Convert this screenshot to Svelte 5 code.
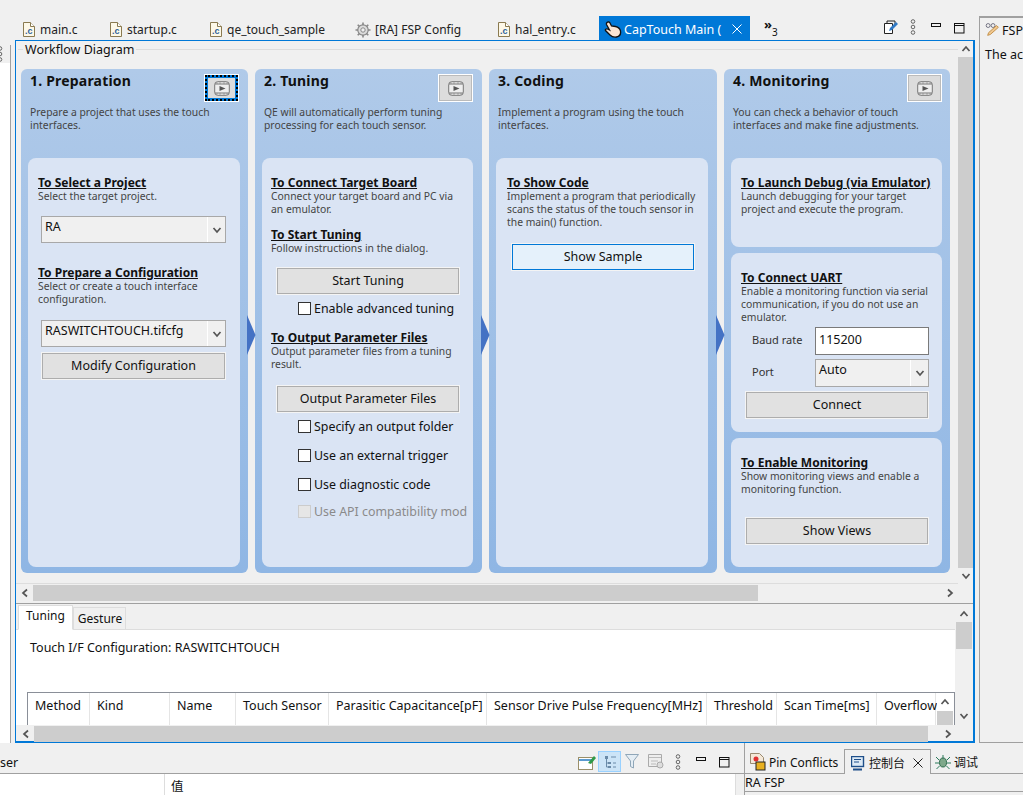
<script>
  const tabs = [
    { label: 'main.c', w: 87 },
    { label: 'startup.c', w: 100 },
    { label: 'qe_touch_sample', w: 145 },
    { label: '[RA] FSP Config', w: 143, gear: true },
    { label: 'hal_entry.c', w: 103 }
  ];
  const columns = [
    ['Method', 62, 'config01'], ['Kind', 80, 'Button(Self)'], ['Name', 66, ''], ['Touch Sensor', 93, ''],
    ['Parasitic Capacitance[pF]', 158, ''], ['Sensor Drive Pulse Frequency[MHz]', 220, ''],
    ['Threshold', 70, ''], ['Scan Time[ms]', 100, ''], ['Overflow', 59, '']
  ];
</script>

{#snippet fileIcon()}
  <svg class="ic" width="12" height="15" viewBox="0 0 12 15"><path d="M.5.5h7l4 4v10H.5z" fill="#fdf8e8" stroke="#8a7a50"/><path d="M7.5.5v4h4" fill="#fff" stroke="#8a7a50"/><text x="2" y="12" font-size="9" font-weight="700" fill="#2d5f9a" font-family="Liberation Sans">.c</text></svg>
{/snippet}

{#snippet chevron(d)}
  <svg class="chev" width="10" height="10" viewBox="0 0 10 10">
    {#if d === 'l'}<path d="M7 1.5 3 5l4 3.5" />
    {:else if d === 'r'}<path d="M3 1.5 7 5 3 8.5" />
    {:else if d === 'u'}<path d="M1.5 7 5 3l3.5 4" />
    {:else}<path d="M1.5 3 5 7l3.5-4" />{/if}
  </svg>
{/snippet}

{#snippet film(focused)}
  <div class="film" class:focused>
    <svg width="16" height="15" viewBox="0 0 16 15"><rect x=".7" y=".7" width="14.6" height="13.6" rx="3" fill="#eee" stroke="#777"/><path d="M1 3h14M1 12h14" stroke="#777"/><path d="M3 1.5v1M6 1.5v1M10 1.5v1M13 1.5v1M3 12.5v1M6 12.5v1M10 12.5v1M13 12.5v1" stroke="#777"/><path d="M5.5 5l6 2.5-6 2.5z" fill="#555"/></svg>
  </div>
{/snippet}

{#snippet combo(value, cls)}
  <div class="combo {cls}"><span class="combo-v">{value}</span><span class="combo-b">{@render chevron('d')}</span></div>
{/snippet}

{#snippet check(label, disabled, cls)}
  <div class="check {cls}" class:disabled><span class="box"></span><span>{label}</span></div>
{/snippet}

{#snippet arrow()}
  <svg class="arrow" width="9" height="40" viewBox="0 0 9 40"><path d="M0 0 8.5 20 0 40z" fill="#4472c4"/></svg>
{/snippet}

{#snippet dots()}
  <svg width="6" height="16" viewBox="0 0 6 16"><g fill="none" stroke="#666"><circle cx="3" cy="2.5" r="1.8"/><circle cx="3" cy="8" r="1.8"/><circle cx="3" cy="13.5" r="1.8"/></g></svg>
{/snippet}

{#snippet minmax()}
  <svg width="12" height="6" viewBox="0 0 12 6"><rect x=".5" y=".5" width="9" height="3" fill="none" stroke="#111"/></svg>
  <svg class="mx" width="12" height="12" viewBox="0 0 12 12"><rect x=".5" y=".5" width="9.5" height="9.5" fill="none" stroke="#111"/><path d="M.5 2.5h9.5" stroke="#111"/></svg>
{/snippet}

<div class="page">
  <div class="top">
    <aside class="left-stub"><div class="stub-head"><span class="stub-dots">{@render dots()}</span></div></aside>

    <section class="editor">
      <header class="tabbar">
        {#each tabs as t}
          <div class="tab" class:gear={t.gear} style="width:{t.w}px">
            {#if t.gear}
              <svg class="ic" width="16" height="16" viewBox="0 0 16 16"><circle cx="8" cy="8" r="5.2" fill="#ddd" stroke="#888" stroke-width="1.2"/><circle cx="8" cy="8" r="2.2" fill="#f0f0f0" stroke="#888"/><g stroke="#888" stroke-width="1.6"><path d="M8 .5v2.5M8 13v2.5M.5 8H3M13 8h2.5M2.7 2.7l1.7 1.7M11.6 11.6l1.7 1.7M2.7 13.3l1.7-1.7M11.6 4.4l1.7-1.7"/></g></svg>
            {:else}
              {@render fileIcon()}
            {/if}
            <span>{t.label}</span>
          </div>
        {/each}
        <div class="tab active">
          <svg width="18" height="17" viewBox="0 0 18 17"><path d="M3 1.5c1-1 2.500-.5 3 .5l1.500 3 4 .5c2.500.5 4.500 2 5 4.500.5 3-1 5.500-4 6-3 .5-5-.5-6.500-2L1.500 9.500c-.5-1 .5-2 2-1.500l2 1L2.500 3.500c-.2-.8 0-1.500.5-2z" fill="#fbe6d4" stroke="#111" stroke-width="1.300"/></svg>
          <span class="active-label">CapTouch Main (</span>
          <svg class="x" width="10" height="10" viewBox="0 0 10 10"><path d="M.5.5l9 9M9.500.5l-9 9" stroke="#fff"/></svg>
        </div>
        <div class="more"><span class="more-a">»</span><span class="more-n">3</span></div>
        <div class="tab-tools">
          <svg width="16" height="16" viewBox="0 0 16 16"><path d="M1.500 4.500h8v10h-8z" fill="#fff" stroke="#222"/><path d="M4 4V2h8v4" fill="none" stroke="#222"/><path d="M6 12l1-3 6-6 2 2-6 6z" fill="#2f78c4"/></svg>
          <span class="td">{@render dots()}</span>
          <span class="tm">{@render minmax()}</span>
        </div>
      </header>

      <div class="editor-body">
        <div class="workflow">
          <div class="wf-main">
            <div class="wf-content">
              <div class="legend"><span>Workflow Diagram</span></div>
              <div class="cards">
                <article class="card c1">
                  <div class="card-head"><h2>1. Preparation</h2>{@render film(true)}</div>
                  <p class="intro">Prepare a project that uses the touch interfaces.</p>
                  <div class="inner grow">
                    <h3>To Select a Project</h3>
                    <p>Select the target project.</p>
                    {@render combo('RA', 'c1a')}
                    <h3 class="h-prep">To Prepare a Configuration</h3>
                    <p>Select or create a touch interface configuration.</p>
                    {@render combo('RASWITCHTOUCH.tifcfg', 'c1b')}
                    <button class="btn b1">Modify Configuration</button>
                  </div>
                </article>
                <div class="gapcol">{@render arrow()}</div>
                <article class="card c2">
                  <div class="card-head"><h2>2. Tuning</h2>{@render film(false)}</div>
                  <p class="intro">QE will automatically perform tuning processing for each touch sensor.</p>
                  <div class="inner grow">
                    <h3>To Connect Target Board</h3>
                    <p>Connect your target board and PC via an emulator.</p>
                    <h3 class="h-start">To Start Tuning</h3>
                    <p>Follow instructions in the dialog.</p>
                    <button class="btn b2">Start Tuning</button>
                    {@render check('Enable advanced tuning', false, 'k0')}
                    <h3 class="h-out">To Output Parameter Files</h3>
                    <p>Output parameter files from a tuning result.</p>
                    <button class="btn b3">Output Parameter Files</button>
                    {@render check('Specify an output folder', false, 'k1')}
                    {@render check('Use an external trigger', false, 'k2')}
                    {@render check('Use diagnostic code', false, 'k2')}
                    {@render check('Use API compatibility mod', true, 'k3')}
                  </div>
                </article>
                <div class="gapcol">{@render arrow()}</div>
                <article class="card c3">
                  <div class="card-head"><h2>3. Coding</h2></div>
                  <p class="intro">Implement a program using the touch interfaces.</p>
                  <div class="inner grow">
                    <h3>To Show Code</h3>
                    <p>Implement a program that periodically scans the status of the touch sensor in the main() function.</p>
                    <button class="btn hot">Show Sample</button>
                  </div>
                </article>
                <div class="gapcol">{@render arrow()}</div>
                <article class="card c4card">
                  <div class="card-head"><h2>4. Monitoring</h2>{@render film(false)}</div>
                  <p class="intro">You can check a behavior of touch interfaces and make fine adjustments.</p>
                  <div class="stack">
                    <div class="inner s1">
                      <h3>To Launch Debug (via Emulator)</h3>
                      <p>Launch debugging for your target project and execute the program.</p>
                    </div>
                    <div class="inner s2">
                      <h3>To Connect UART</h3>
                      <p>Enable a monitoring function via serial communication, if you do not use an emulator.</p>
                      <div class="field f1"><label for="baud">Baud rate</label><input id="baud" value="115200" /></div>
                      <div class="field f2"><span class="flabel">Port</span>{@render combo('Auto', 'c4')}</div>
                      <button class="btn b4">Connect</button>
                    </div>
                    <div class="inner s3">
                      <h3>To Enable Monitoring</h3>
                      <p>Show monitoring views and enable a monitoring function.</p>
                      <button class="btn b5">Show Views</button>
                    </div>
                  </div>
                </article>
              </div>
            </div>
            <div class="vbar wf-v">
              <span class="sb-btn">{@render chevron('u')}</span>
              <span class="track"><span class="thumb"></span></span>
              <span class="sb-btn">{@render chevron('d')}</span>
            </div>
          </div>
          <div class="hbar wf-h">
            <span class="sb-btn first">{@render chevron('l')}</span>
            <span class="htrack"><span class="hthumb t1"></span></span>
            <span class="sb-btn">{@render chevron('r')}</span>
          </div>
        </div>

        <div class="lower">
          <div class="lower-main">
            <div class="lower-content">
              <div class="subtabs">
                <div class="subtab on">Tuning</div>
                <div class="subtab">Gesture</div>
              </div>
              <div class="pane">
                <div class="config">Touch I/F Configuration: RASWITCHTOUCH</div>
                <div class="table">
                  <div class="thead">
                    {#each columns as [name, w, cell]}
                      <div class="th" style="width:{w}px">{name}<div class="td-cell">{cell}</div></div>
                    {/each}
                  </div>
                  <div class="tv">
                    <span class="sb-btn">{@render chevron('u')}</span>
                    <span class="tvthumb"></span>
                  </div>
                </div>
              </div>
            </div>
            <div class="vbar lo-v">
              <span class="sb-btn">{@render chevron('u')}</span>
              <span class="track"><span class="thumb t2"></span></span>
              <span class="sb-btn">{@render chevron('d')}</span>
            </div>
          </div>
          <div class="hbar lo-h">
            <span class="sb-btn">{@render chevron('l')}</span>
            <span class="htrack"><span class="hthumb t3"></span></span>
            <span class="sb-btn">{@render chevron('r')}</span>
          </div>
        </div>
      </div>
    </section>

    <aside class="right">
      <div class="right-title">
        <svg width="18" height="18" viewBox="0 0 18 18"><circle cx="3.500" cy="4" r="2.200" fill="none" stroke="#667"/><circle cx="9" cy="4" r="2.200" fill="none" stroke="#667"/><path d="M3 15l1-3 9-8 2 2-9 8z" fill="#f0c890" stroke="#c08a40"/></svg>
        <span>FSP</span>
      </div>
      <div class="right-body">The ac</div>
    </aside>
  </div>

  <div class="bottom">
    <div class="b-left">
      <div class="b-bar">
        <span class="b-ser">ser</span>
        <div class="b-tools">
          <svg width="18" height="16" viewBox="0 0 18 16"><rect x=".5" y="3.500" width="14" height="12" fill="#fff" stroke="#9a8f6a"/><path d="M1 6h13" stroke="#5a9ad0" stroke-width="2"/><path d="M10 9l6-7 2 2-5 6z" fill="#2e9a48"/></svg>
          <span class="tool-on"><svg width="12" height="13" viewBox="0 0 12 13"><path d="M1 1h3v3H1zM4 7h3v2H4zM4 11h3v2H4z" fill="#6a8aa8"/><path d="M2.500 4v8M2.500 8H4M2.500 12H4M7 2h5M9 8h3M9 12h3" stroke="#6a8aa8" fill="none"/></svg></span>
          <svg width="14" height="15" viewBox="0 0 14 15"><path d="M.5.500h13L8.500 7v7l-3-1.500V7z" fill="#e4edf4" stroke="#8fa6b8"/></svg>
          <svg class="tb-table" width="16" height="15" viewBox="0 0 16 15"><path d="M.5.500h13v12H.5z" fill="#eee" stroke="#aaa"/><path d="M1 3.500h12M3 7h7M3 10h5" stroke="#bbb"/><circle cx="12" cy="11" r="3" fill="#ddd" stroke="#aaa"/></svg>
          <span class="bd">{@render dots()}</span>
          <span class="bm">{@render minmax()}</span>
        </div>
      </div>
      <div class="b-table">
        <div class="b-c1"></div>
        <div class="b-c2">值</div>
        <div class="b-c3"></div>
      </div>
    </div>
    <div class="b-right">
      <div class="b-tabs">
        <div class="btab pin">
          <svg width="18" height="18" viewBox="0 0 18 18"><path d="M.5.500h9l4 4v6H.5z" fill="#f4e8d8" stroke="#9a8a70"/><circle cx="6" cy="6" r="2.500" fill="#e03030"/><rect x="6" y="9" width="9" height="8" fill="#e8b020" stroke="#222"/></svg>
          <span>Pin Conflicts</span>
        </div>
        <div class="btab on">
          <svg width="15" height="15" viewBox="0 0 15 15"><rect x=".5" y=".5" width="12" height="10" fill="#ddeaf6" stroke="#1f4f8a" stroke-width="1.400"/><path d="M3 3.500h7M3 6h5" stroke="#1f4f8a"/><path d="M2 13.500h9" stroke="#1f4f8a" stroke-width="2"/></svg>
          <span>控制台</span>
          <svg class="bx" width="10" height="10" viewBox="0 0 10 10"><path d="M.5.5l9 9M9.500.5l-9 9" stroke="#222"/></svg>
        </div>
        <div class="btab dbg">
          <svg width="16" height="16" viewBox="0 0 16 16"><ellipse cx="8" cy="8.500" rx="3.500" ry="4.500" fill="#7ea88a" stroke="#2a6a4a"/><path d="M8 4V1M4 6 1 3M12 6l3-3M4 9H0M12 9h4M4.500 12l-3 3M11.500 12l3 3" stroke="#2a7a5a"/></svg>
          <span>调试</span>
        </div>
      </div>
      <div class="b-console">RA FSP</div>
    </div>
  </div>
</div>

<style>
  :global(body) { margin: 0; background: #f0f0f0; }
  * { box-sizing: border-box; }
  .page {
    width: 1023px; height: 795px; overflow: hidden; background: #f0f0f0; color: #111;
    font-family: "Noto Sans", "Noto Sans CJK SC", sans-serif; font-size: 12.5px;
    display: flex; flex-direction: column;
  }
  .top { height: 743px; display: flex; flex: none; }
  .bottom { flex: 1; display: flex; }
  .left-stub { width: 11px; margin-top: 45px; border-right: 1px solid #a0a0a0; background: #fff; flex: none; }
  .stub-head { height: 18px; background: #f0f0f0; overflow: hidden; }
  .stub-dots { display: block; margin: 1px 0 0 -3px; }

  .editor { width: 960px; margin-left: 4px; flex: none; display: flex; flex-direction: column; }
  .tabbar { height: 40px; flex: none; display: flex; align-items: flex-end; padding-left: 8px; }
  .tab { height: 24px; display: flex; align-items: center; gap: 5px; font-size: 12px; white-space: nowrap; color: #222; padding-top: 3px; flex: none; }
  .tab.gear { gap: 4px; }
  .tab.active { background: #0078d7; color: #fff; width: 151px; height: 24px; padding: 2px 0 0 5px; margin-left: -2px; gap: 2px; flex: none; font-size: 12.5px; }
  .active-label { width: 98px; overflow: hidden; }
  .x { margin-left: 8px; }
  .ic { flex: none; }
  .more { width: 30px; margin-left: 14px; height: 24px; position: relative; flex: none; }
  .more-a { position: absolute; left: 0; top: 1px; font-size: 13px; font-weight: 700; line-height: 14px; }
  .more-n { position: absolute; left: 8px; top: 10px; font-size: 10px; line-height: 12px; }
  .tab-tools { display: flex; align-items: center; height: 24px; margin-left: 89px; padding-bottom: 2px; flex: none; }
  .td { margin-left: 11px; display: flex; }
  .tm { display: flex; align-items: center; margin-left: 15px; }
  .tm svg { align-self: flex-start; margin-top: 4px; }
  .tm .mx { margin: 4px 0 0 11px; }

  .editor-body { flex: 1; border: 1px solid #0078d7; border-right-width: 2px; border-bottom-width: 2px; display: flex; flex-direction: column; min-height: 0; }
  .workflow { height: 562px; flex: none; display: flex; flex-direction: column; }
  .wf-main { height: 543px; flex: none; display: flex; }
  .wf-content { width: 942px; flex: none; display: flex; flex-direction: column; border-bottom: 1px solid #ddd; }
  .legend { height: 28px; flex: none; margin-left: 2px; position: relative; padding-left: 5px; }
  .legend::before { content: ""; position: absolute; left: 0; right: 0; top: 8px; border-top: 1px solid #ddd; }
  .legend span { position: relative; background: #f0f0f0; padding: 0 2px; line-height: 18px; display: inline-block; font-size: 12.5px; }
  .cards { display: flex; margin-left: 5px; height: 504px; flex: none; }
  .gapcol { width: 7px; flex: none; position: relative; }
  .arrow { position: absolute; left: -1px; top: 246px; }
  .card {
    width: 227px; flex: none; border-radius: 6px; display: flex; flex-direction: column;
    background: linear-gradient(#b0cae9, #8fb6e4); padding: 0 8px 6px 7px;
  }
  .c2 { padding-right: 9px; }
  .c2 .inner { padding-left: 9px; }
  .c3 { width: 228px; padding-right: 9px; }
  .c3 .inner { padding-left: 11px; padding-right: 9px; }
  .c4card { width: 226px; }
  .card-head { height: 34px; display: flex; justify-content: space-between; padding: 2px 0 0 2px; flex: none; }
  .card h2 { margin: 0; font-size: 14px; line-height: 19px; font-weight: 700; color: #111; letter-spacing: .2px; }
  .film { width: 35px; height: 28px; margin: 3px 0 0 0; flex: none; background: #dcdcdc; border: 1px solid #fff; outline: 1px solid #bbb; outline-offset: -2px; display: flex; align-items: center; justify-content: center; }
  .c1 .film { margin-right: 1px; }
  .film.focused { outline: 2px dotted #000; outline-offset: -3px; background: #dcdcdc; border: 1px solid #fff; box-shadow: inset 0 0 0 3px #0078d7; }
  p { margin: 0; font-size: 10.35px; line-height: 13px; color: #444; }
  .intro { height: 55px; flex: none; padding: 3px 4px 0 2px; }
  .grow { flex: 1; }
  .inner { background: #dae4f4; border-radius: 8px; padding: 18px 10px 0; }
  .inner h3 { margin: 0; font-size: 12px; line-height: 14px; font-weight: 700; color: #111; text-decoration: underline; text-underline-offset: 1px; }
  .stack { flex: 1; display: flex; flex-direction: column; gap: 6px; }
  .s1 { height: 89px; flex: none; }
  .s2 { height: 179px; flex: none; }
  .s3 { flex: 1; }
  .h-prep { margin-top: 23px !important; }
  .h-start { margin-top: 12px !important; }
  .h-out { margin-top: 15px !important; }

  .combo { height: 27px; display: flex; background: #f0f0f0; border: 1px solid #a8a8a8; font-size: 12.5px; color: #111; }
  .combo-v { flex: 1; padding: 1px 3px; line-height: 18px; }
  .combo-b { width: 18px; border-left: 1px solid #fff; display: flex; align-items: center; justify-content: center; }
  .c1a { margin: 13px 4px 0 3px; }
  .c1b { margin: 14px 4px 0 3px; }
  .chev { fill: none; stroke: #555; stroke-width: 1.700; display: block; }

  .btn { display: block; height: 26px; width: 183px; background: #e1e1e1; border: 1px solid #adadad; outline: 1px solid #f4f4f4; font: inherit; font-size: 12.5px; color: #111; padding: 0 0 2px; }
  .b1 { margin: 6px 0 0 4px; }
  .b2 { margin: 13px 0 0 6px; width: 182px; }
  .b3 { margin: 15px 0 0 6px; width: 182px; }
  .hot { background: #e5f1fb; border-color: #0078d7; margin: 15px 0 0 5px; width: 182px; }
  .b4 { margin: 5px 0 0 5px; width: 182px; }
  .b5 { margin: 22px 0 0 5px; width: 182px; }

  .check { display: flex; align-items: center; gap: 3px; font-size: 12.4px; height: 16px; color: #111; margin-left: 27px; white-space: nowrap; }
  .box { width: 13px; height: 13px; background: #fff; border: 1px solid #333; flex: none; }
  .check.disabled { color: #8a8a8a; }
  .check.disabled .box { border-color: #ccc; background: #e6e6e6; }
  .k0 { margin-top: 6px; }
  .k1 { margin-top: 6px; }
  .k2 { margin-top: 13px; }
  .k3 { margin-top: 11px; }

  .field { display: flex; align-items: center; height: 28px; padding-left: 11px; font-size: 11px; color: #333; }
  .field label, .flabel { width: 63px; flex: none; padding-bottom: 3px; }
  .field input { width: 114px; height: 28px; border: 1px solid #7a7a7a; background: #fff; font: inherit; font-size: 12.5px; padding: 0 3px 4px; color: #111; }
  .f1 { margin-top: 3px; }
  .f2 { margin-top: 4px; }
  .c4 { width: 114px; height: 28px; }

  .vbar { display: flex; flex-direction: column; width: 15px; margin-left: 0; flex: none; }
  .sb-btn { display: flex; align-items: center; justify-content: center; height: 16px; width: 16px; flex: none; }
  .sb-btn.first { width: 17px; }
  .track { flex: 1; display: block; }
  .thumb { display: block; height: 100%; background: #cdcdcd; }
  .wf-v { height: 543px; margin-top: 0; }
  .wf-v .sb-btn { width: 15px; }
  .hbar { display: flex; align-items: center; height: 17px; flex: none; }
  .htrack { flex: 1; height: 16px; display: block; }
  .hthumb { display: block; height: 100%; background: #cdcdcd; }
  .t1 { width: 725px; }
  .wf-h { width: 942px; }

  .lower { flex: 1; border-top: 1px solid #a0a0a0; min-height: 0; display: flex; flex-direction: column; }
  .lower-main { height: 121px; display: flex; flex: none; }
  .lower-content { width: 939px; flex: none; display: flex; flex-direction: column; overflow: hidden; }
  .subtabs { height: 26px; flex: none; display: flex; align-items: flex-end; padding-left: 2px; border-bottom: 1px solid #ddd; }
  .subtab { height: 22px; border: 1px solid #ddd; border-bottom: 0; padding: 0 3px 0 4px; line-height: 21px; font-size: 12px; }
  .subtab.on { height: 25px; background: #fff; padding: 0 7px; line-height: 20px; margin-bottom: -1px; border-bottom: 1px solid #fff; }
  .pane { flex: 1; background: #fff; overflow: hidden; padding: 8px 0 0 14px; }
  .config { height: 54px; font-size: 12.5px; line-height: 20px; }
  .table { margin-left: -3px; width: 928px; height: 33px; border: 1px solid #8a8f98; border-bottom: 0; display: flex; overflow: hidden; }
  .thead { display: flex; width: 909px; overflow: hidden; flex: none; }
  .th { height: 60px; flex: none; padding: 4px 0 0 7px; line-height: 18px; font-size: 12.5px; border-right: 1px solid #e5e5e5; white-space: nowrap; }
  .td-cell { margin-top: 7px; height: 18px; }
  .tv { width: 16px; flex: none; display: flex; flex-direction: column; }
  .tv .sb-btn { height: 18px; }
  .tvthumb { height: 14px; background: #cdcdcd; flex: none; }
  .lo-v { width: 16px; height: 118px; margin: 2px 0 0 1px; }
  .t2 { height: 27px; }
  .lo-h { width: 938px; margin-left: 2px; }
  .t3 { width: 894px; }

  .right { flex: 1; margin: 16px 0 0 4px; border-left: 1px solid #a0a0a0; border-top: 2px solid #a0a0a0; border-bottom: 1px solid #a0a0a0; min-width: 0; overflow: hidden; }
  .right-title { height: 24px; display: flex; align-items: center; gap: 1px; padding-left: 5px; font-size: 12.5px; white-space: nowrap; }
  .right-body { font-size: 12.5px; padding: 4px 0 0 5px; white-space: nowrap; }

  .b-left { width: 745px; flex: none; display: flex; flex-direction: column; }
  .b-bar { height: 31px; flex: none; display: flex; border-bottom: 1px solid #a0a0a0; align-items: center; position: relative; }
  .b-ser { font-size: 12.5px; padding-top: 8px; }
  .b-tools { margin-left: auto; display: flex; align-items: center; padding-right: 14px; padding-top: 7px; }
  .tool-on { width: 23px; height: 21px; margin: 0 4px 0 2px; background: #cce4f7; border: 1px solid #99d1ff; display: flex; align-items: center; justify-content: center; }
  .tb-table { margin-left: 9px; }
  .bd { margin-left: 11px; display: flex; }
  .bm { display: flex; align-items: center; margin-left: 15px; }
  .bm svg { align-self: flex-start; margin-top: 2px; }
  .bm .mx { margin-left: 11px; }
  .b-table { flex: 1; display: flex; background: #fff; }
  .b-c1 { width: 165px; border-right: 1px solid #ddd; }
  .b-c2 { width: 571px; border-right: 1px solid #ddd; padding: 2px 0 0 6px; font-size: 12.5px; }
  .b-c3 { flex: 1; background: #f0f0f0; }
  .b-right { flex: 1; border-left: 1px solid #a0a0a0; margin-left: -1px; display: flex; flex-direction: column; min-width: 0; }
  .b-tabs { height: 31px; flex: none; display: flex; align-items: flex-end; border-bottom: 1px solid #a0a0a0; }
  .btab { height: 24px; display: flex; align-items: center; gap: 3px; font-size: 12px; white-space: nowrap; flex: none; padding-top: 2px; }
  .pin { width: 99px; padding-left: 5px; gap: 1px; }
  .btab.on { width: 87px; height: 25px; border: 1px solid #a0a0a0; border-bottom: 0; padding-left: 6px; gap: 3px; background: #f0f0f0; margin-bottom: -1px; }
  .bx { margin-left: 5px; }
  .dbg { padding-left: 4px; gap: 3px; }
  .b-console { height: 18px; border-bottom: 1px solid #a0a0a0; padding-left: 0; font-size: 12.5px; line-height: 18px; flex: none; }
</style>
